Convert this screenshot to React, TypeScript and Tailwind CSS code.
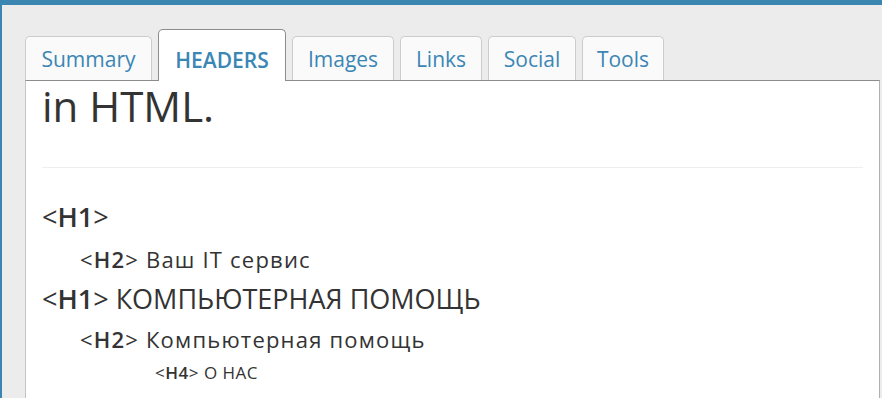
import React from "react";

const tabs = [
  { label: "Summary", w: 127 },
  { label: "HEADERS", w: 128, active: true },
  { label: "Images", w: 102 },
  { label: "Links", w: 82 },
  { label: "Social", w: 88 },
  { label: "Tools", w: 82 },
];

function Tag({ t }: { t: string }) {
  return (
    <span>
      &lt;<span className="font-semibold">{t}</span>&gt;
    </span>
  );
}

export default function App() {
  return (
    <div
      className="w-[882px] h-[398px] overflow-hidden bg-[#ececec] border-l-[2px] border-[#3a86b0] flex flex-col text-[#333]"
      style={{ fontFamily: '"Open Sans", "Noto Sans", sans-serif' }}
    >
      <div className="h-[5px] bg-[#3a86b0] shrink-0" />
      <div className="mt-[24px] pl-[23px] flex items-end gap-[6px] h-[51px] shrink-0 relative z-10">
        {tabs.map((t) =>
          t.active ? (
            <div
              key={t.label}
              className="h-[52px] mb-[-1px] bg-white border border-b-0 border-[#8c8c8c] rounded-t-[5px] text-center text-[21px] leading-[43px] pt-[9px] font-semibold text-[#3a86b5]"
              style={{ width: t.w }}
            >
              {t.label}
            </div>
          ) : (
            <div
              key={t.label}
              className="h-[44px] bg-[#fafafa] border border-b-0 border-[#cccccc] rounded-t-[5px] text-center text-[21px] leading-[43px] pt-[1px] text-[#3a86b5]"
              style={{ width: t.w }}
            >
              {t.label}
            </div>
          )
        )}
      </div>
      <div className="flex-1 mr-[2px] ml-[23px] bg-white border-t border-t-[#8c8c8c] border-l border-r border-l-[#c4c4c4] border-r-[#b0b0b0] px-[16px] overflow-hidden">
        <div className="mt-[2px] text-[42px] leading-[46px] whitespace-nowrap">in HTML.</div>
        <div className="mt-[38px] border-t border-[#eeeeee]" />
        <div className="mt-[27px] text-[27px] leading-[44px] whitespace-nowrap">
          <Tag t="H1" />
        </div>
        <div className="ml-[38px] text-[22px] leading-[40px] tracking-[1.2px] whitespace-nowrap">
          <Tag t="H2" /> Ваш IT сервис
        </div>
        <div className="text-[27px] leading-[40px] whitespace-nowrap">
          <Tag t="H1" /> КОМПЬЮТЕРНАЯ ПОМОЩЬ
        </div>
        <div className="ml-[38px] text-[22px] leading-[40px] tracking-[1.2px] whitespace-nowrap">
          <Tag t="H2" /> Компьютерная помощь
        </div>
        <div className="ml-[113px] text-[17px] leading-[28px] tracking-[0.5px] whitespace-nowrap">
          <Tag t="H4" /> О НАС
        </div>
      </div>
    </div>
  );
}
